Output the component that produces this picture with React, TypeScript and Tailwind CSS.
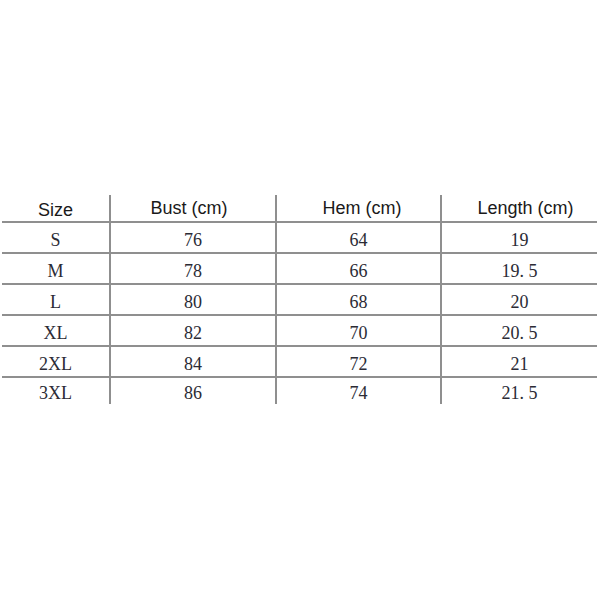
import React from "react";

const HEADERS = ["Size", "Bust (cm)", "Hem (cm)", "Length (cm)"];

// small nudges so header labels sit where the source image has them
const HEADER_NUDGE = ["pt-[3px]", "pr-[8px] pb-[1px]", "pl-[7px] pb-[1px]", "pl-[12px] pb-[1px]"];

const ROWS: string[][] = [
  ["S", "76", "64", "19"],
  ["M", "78", "66", "19. 5"],
  ["L", "80", "68", "20"],
  ["XL", "82", "70", "20. 5"],
  ["2XL", "84", "72", "21"],
  ["3XL", "86", "74", "21. 5"],
];

const COL_W = ["w-[107px]", "w-[166px]", "w-[165px]", "w-[157px]"];

export default function App() {
  return (
    <div className="w-[600px] h-[600px] bg-white pt-[195px] pl-[2px]">
      <div className="flex flex-col w-[595px]">
        {/* Header */}
        <div className="flex h-[28px] border-b-2 border-[#8f8f8f]">
          {HEADERS.map((h, i) => (
            <div
              key={h}
              className={`${COL_W[i]} ${i > 0 ? "border-l-2 border-[#8f8f8f]" : ""} ${HEADER_NUDGE[i]} flex items-center justify-center text-[18px] leading-none text-[#1a1a1a]`}
              style={{ fontFamily: '"Liberation Sans", Arial, sans-serif' }}
            >
              {h}
            </div>
          ))}
        </div>

        {/* Body */}
        {ROWS.map((row, r) => {
          const last = r === ROWS.length - 1;
          return (
            <div
              key={row[0]}
              className={`flex ${last ? "h-[26px]" : "h-[31px] border-b-2 border-[#8f8f8f]"}`}
            >
              {row.map((cell, i) => (
                <div
                  key={i}
                  className={`${COL_W[i]} ${i > 0 ? "border-l-2 border-[#8f8f8f]" : ""} flex items-center justify-center pt-[4px] text-[18px] leading-none text-[#2b2b35]`}
                  style={{ fontFamily: '"Liberation Serif", "Times New Roman", serif' }}
                >
                  {cell}
                </div>
              ))}
            </div>
          );
        })}
      </div>
    </div>
  );
}
